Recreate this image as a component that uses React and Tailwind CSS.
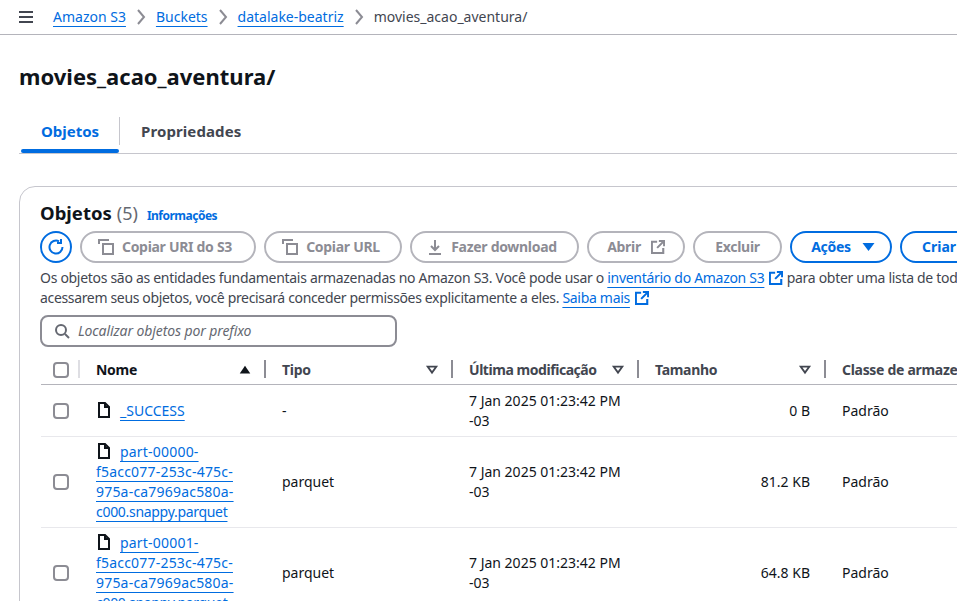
import React from 'react';

const rows = [
  { name: '_SUCCESS', type: '-', size: '0 B' },
  { name: 'part-00000-f5acc077-253c-475c-975a-ca7969ac580a-c000.snappy.parquet', type: 'parquet', size: '81.2 KB' },
  { name: 'part-00001-f5acc077-253c-475c-975a-ca7969ac580a-c000.snappy.parquet', type: 'parquet', size: '64.8 KB' },
];

const gridCols = 'grid grid-cols-[41px_186px_187px_186px_187px_200px] w-[987px]';
const linkClass = 'text-[#006ce0] underline underline-offset-[4px]';

const Chevron = () => (
  <svg width="16" height="16" viewBox="0 0 16 16" fill="none" stroke="#8c8c94" strokeWidth="2" className="mx-[7px]">
    <path d="m5 1 6 7-6 7" />
  </svg>
);

const CopyIcon = () => (
  <svg width="16" height="16" viewBox="0 0 16 16" fill="none" stroke="currentColor" strokeWidth="2">
    <path d="M1 5V1h10" />
    <path d="M5 5h10v10H5z" />
  </svg>
);

const DownloadIcon = () => (
  <svg width="16" height="16" viewBox="0 0 16 16" fill="none" stroke="currentColor" strokeWidth="2">
    <path d="M8 1v9M4 7l4 4 4-4M2 15h12" />
  </svg>
);

const ExternalIcon = ({ className }) => (
  <svg width="14" height="14" viewBox="0 0 16 16" fill="none" stroke="currentColor" strokeWidth="2.4" className={className}>
    <path d="M14 9v6H1V2h6" />
    <path d="M9 1h6v6M15 1 7 9" />
  </svg>
);

const FileIcon = () => (
  <svg width="16" height="16" viewBox="0 0 16 16" fill="none" stroke="#0f141a" strokeWidth="2" className="inline-block align-[-2px] mr-[8px]">
    <path d="M3 1h6l4 4v10H3z" />
    <path d="M9 1v4h4" />
  </svg>
);

const SortDown = () => (
  <svg width="14" height="14" viewBox="0 0 16 16" fill="none" stroke="#424650" strokeWidth="2">
    <path d="M3 4h10l-5 7z" />
  </svg>
);

const DisabledButton = ({ className, children }) => (
  <div className={`flex items-center justify-center h-[32px] rounded-[20px] border-2 border-[#b4b4bb] text-[#8c8c94] font-bold tracking-[-0.3px] ${className}`}>
    {children}
  </div>
);

const HeaderCell = ({ children, icon, className }) => (
  <div className={`relative flex items-center justify-between h-[29px] pl-[14px] pr-[16px] font-bold ${className}`}>
    <span className="whitespace-nowrap">{children}</span>
    {icon}
    <div className="absolute right-[2px] top-[5px] w-[2px] h-[18px] bg-[#8c8c94]" />
  </div>
);

const Checkbox = () => (
  <div className="w-[16px] h-[16px] rounded-[4px] border-2 border-[#8c8c94] bg-white" />
);

const Row = ({ row, first }) => (
  <div className={`${gridCols} border-b border-[#e8e8ec] text-[#0f141a]`}>
    <div className="flex items-center pl-[12px]">
      <Checkbox />
    </div>
    <div className="pl-[14px] pr-[16px] py-[5px]">
      {first ? (
        <div className="pt-[11px] pb-[10px]">
          <FileIcon />
          <a className={linkClass}>{row.name}</a>
        </div>
      ) : (
        <div>
          <FileIcon />
          <a className={linkClass}>
            <span className="tracking-[0.2px]">{row.name.slice(0, 11)}</span>
            <br />
            <span className="tracking-[0.2px]">{row.name.slice(11, 30)}</span>
            <br />
            <span className="tracking-[0.2px]">{row.name.slice(30, 48)}</span>
            <br />
            <span className="tracking-[-0.3px]">{row.name.slice(48)}</span>
          </a>
        </div>
      )}
    </div>
    <div className="flex items-center pl-[14px]">{row.type}</div>
    <div className="flex items-center pl-[14px] pr-[16px]">7 Jan 2025 01:23:42 PM -03</div>
    <div className="flex items-center justify-end pr-[18px]">{row.size}</div>
    <div className="flex items-center pl-[14px]">Padrão</div>
  </div>
);

export default function App() {
  return (
    <div className="w-[957px] h-[601px] overflow-hidden bg-white text-[14px] leading-[20px] text-[#0f141a] font-['Noto_Sans','Open_Sans',sans-serif]">
      {/* Breadcrumbs */}
      <div className="flex items-center h-[35px] border-b border-[#b4b4bb] pl-[19px]">
        <svg width="14" height="12" viewBox="0 0 14 12" stroke="#424650" strokeWidth="2" className="mr-[20px]">
          <path d="M0 1h14M0 6h14M0 11h14" />
        </svg>
        <a className={linkClass}>Amazon S3</a>
        <Chevron />
        <a className={linkClass}>Buckets</a>
        <Chevron />
        <a className={linkClass}>datalake-beatriz</a>
        <Chevron />
        <span className="text-[#424650]">movies_acao_aventura/</span>
      </div>

      {/* Title */}
      <h1 className="pl-[19px] pt-[26px] text-[22px] leading-[30px] font-bold">movies_acao_aventura/</h1>

      {/* Tabs */}
      <div className="flex ml-[19px] mt-[24px] h-[39px] w-[938px] border-b border-[#c6c6cd] text-[15px] font-bold text-[#424650]">
        <div className="relative flex items-center justify-center w-[101px] pl-[2px] text-[#006ce0] border-r border-[#c6c6cd] h-[28px] mt-[2px]">
          Objetos
          <div className="absolute left-[2px] right-0 top-[32px] h-[4px] rounded bg-[#006ce0]" />
        </div>
        <div className="flex items-center pl-[21px] h-[28px] mt-[2px] tracking-[0.1px]">Propriedades</div>
      </div>

      {/* Card */}
      <div className="ml-[19px] mt-[32px] w-[1100px] rounded-[16px] border border-[#c6c6cd] pl-[20px] pt-[13px] pb-[20px]">
        <div className="flex items-baseline h-[26px]">
          <h2 className="text-[18.5px] leading-[26px] font-bold">Objetos</h2>
          <span className="ml-[5px] text-[18px] text-[#656871]">(5)</span>
          <a className="ml-[9px] text-[12px] font-bold tracking-[-0.5px] text-[#006ce0]">Informações</a>
        </div>

        {/* Toolbar */}
        <div className="flex gap-[8px] mt-[5px] w-[1000px]">
          <div className="flex items-center justify-center w-[32px] h-[32px] rounded-full border-2 border-[#006ce0] text-[#006ce0]">
            <svg width="16" height="16" viewBox="0 0 16 16" fill="none" stroke="currentColor" strokeWidth="2">
              <path d="M14.5 8A6.5 6.5 0 1 1 11 2.3" />
              <path d="M11 0v4H7" transform="translate(2 0)" />
            </svg>
          </div>
          <DisabledButton className="w-[176px] gap-2 pr-[6px]"><CopyIcon />Copiar URI do S3</DisabledButton>
          <DisabledButton className="w-[138px] gap-2 pr-[4px]"><CopyIcon />Copiar URL</DisabledButton>
          <DisabledButton className="w-[169px] gap-2 pr-[5px]"><DownloadIcon />Fazer download</DisabledButton>
          <DisabledButton className="w-[98px] gap-[10px]">Abrir<ExternalIcon /></DisabledButton>
          <DisabledButton className="w-[89px]">Excluir</DisabledButton>
          <div className="flex items-center justify-center gap-[10px] w-[102px] h-[32px] pl-[5px] rounded-[20px] border-2 border-[#006ce0] text-[#006ce0] font-bold tracking-[-0.3px]">
            Ações
            <svg width="15" height="10" viewBox="0 0 14 10" fill="currentColor"><path d="M1 1h12L7 9z" /></svg>
          </div>
          <div className="flex items-center pl-[20px] w-[120px] h-[32px] rounded-[20px] border-2 border-[#006ce0] text-[#006ce0] font-bold">
            Criar pasta
          </div>
        </div>

        {/* Description */}
        <p className="mt-[5px] w-[1060px] text-[#424650] tracking-[-0.3px]">
          Os objetos são as entidades fundamentais armazenadas no Amazon S3. Você pode usar o{' '}
          <a className={linkClass}>inventário do Amazon S3</a>
          <ExternalIcon className="inline-block ml-[5px] align-[-2px] text-[#006ce0]" />{' '}
          para obter uma lista de todos os objetos.
          <br />
          <span className="tracking-[-0.34px]">acessarem seus objetos, você precisará conceder permissões explicitamente a eles.</span>{' '}
          <a className={linkClass}>Saiba mais</a>
          <ExternalIcon className="inline-block ml-[5px] align-[-2px] text-[#006ce0]" />
        </p>

        {/* Search */}
        <div className="flex items-center gap-[8px] mt-[7px] w-[357px] h-[32px] px-[12px] rounded-[8px] border-2 border-[#8c8c94] text-[#656871] italic tracking-[-0.1px]">
          <svg width="16" height="16" viewBox="0 0 16 16" fill="none" stroke="#656871" strokeWidth="2">
            <circle cx="7" cy="7" r="5" />
            <path d="m11 11 4 4" />
          </svg>
          Localizar objetos por prefixo
        </div>

        {/* Table */}
        <div className="mt-[8px] ml-[1px]">
          <div className={`${gridCols} border-b border-[#b4b4bb] text-[#424650]`}>
            <div className="relative flex items-center h-[29px] pl-[12px]">
              <Checkbox />
              <div className="absolute right-[2px] top-[5px] w-[2px] h-[18px] bg-[#dedee3]" />
            </div>
            <HeaderCell className="text-[#0f141a] tracking-[-0.3px]" icon={<svg width="14" height="14" viewBox="0 0 16 16" fill="#0f141a"><path d="M8 3l6 9H2z" /></svg>}>Nome</HeaderCell>
            <HeaderCell className="tracking-[-0.3px]" icon={<SortDown />}>Tipo</HeaderCell>
            <HeaderCell className="tracking-[-0.45px]" icon={<SortDown />}>Última modificação</HeaderCell>
            <HeaderCell className="tracking-[-0.3px]" icon={<SortDown />}>Tamanho</HeaderCell>
            <div className="flex items-center h-[29px] pl-[14px] font-bold tracking-[-0.3px] whitespace-nowrap">Classe de armazenamento</div>
          </div>
          {rows.map((row, i) => (
            <Row key={row.name} row={row} first={i === 0} />
          ))}
        </div>
      </div>
    </div>
  );
}
